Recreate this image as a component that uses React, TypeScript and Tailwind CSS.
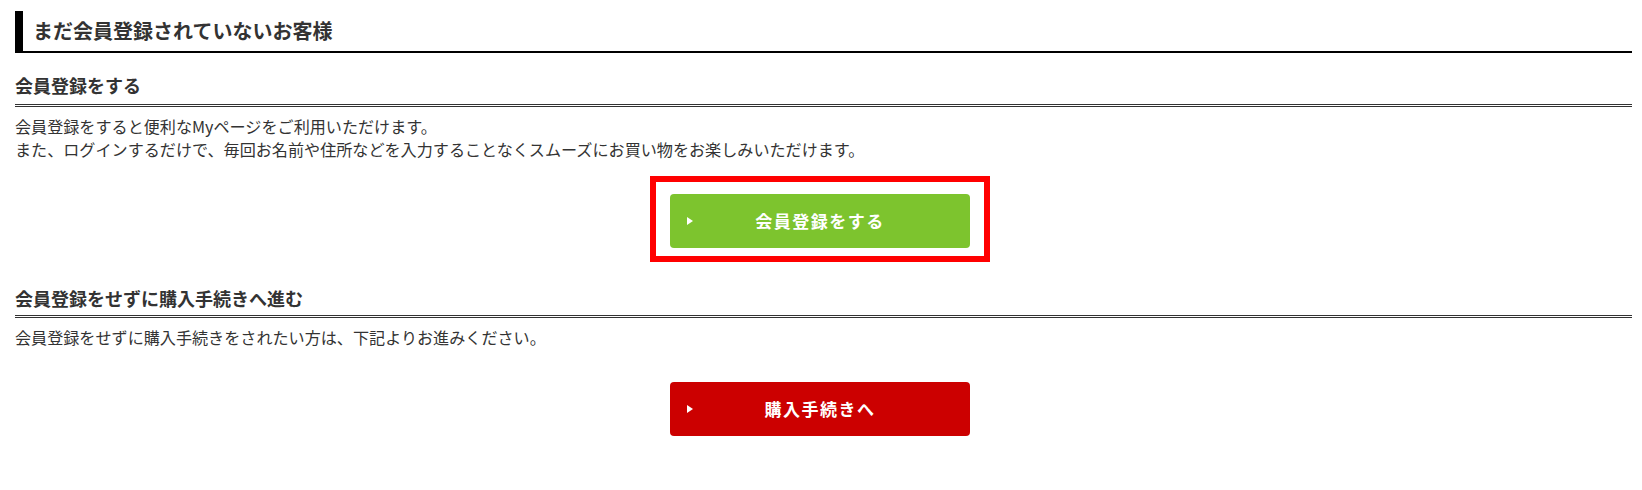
const font = "font-['Meiryo','Noto_Sans_CJK_JP',sans-serif]";

function Arrow() {
  return (
    <svg width="6" height="8" viewBox="0 0 6 8" className="absolute left-[17px] top-1/2 -translate-y-1/2">
      <polygon points="0,0 6,4 0,8" fill="#ffffff" />
    </svg>
  );
}

export default function App() {
  return (
    <div className={`${font} min-h-screen bg-white pl-[15px] pr-[10px] pt-[11px] text-[#333333]`}>
      <h2 className="border-b-2 border-l-8 border-black pl-[10px] text-[20px] font-bold leading-[40px]">
        まだ会員登録されていないお客様
      </h2>

      <h3 className="mt-[18px] border-b-[3px] border-double border-[#333333] pb-[5px] text-[18px] font-bold leading-[28px]">
        会員登録をする
      </h3>
      <p className="mt-[8px] text-[16.1px] leading-[23px]">
        会員登録をすると便利なMyページをご利用いただけます。
        <br />
        また、ログインするだけで、毎回お名前や住所などを入力することなくスムーズにお買い物をお楽しみいただけます。
      </p>

      <div className="mt-[15px] flex justify-center pr-[7px]">
        <div className="flex h-[86px] w-[340px] items-start justify-center border-[6px] border-[#ff0000] pt-[12px]">
          <a
            href="#"
            className="relative flex h-[54px] w-[300px] items-center justify-center rounded-[4px] bg-[#7dc42e] text-[17px] font-bold tracking-[1.5px] text-white"
          >
            <Arrow />
            会員登録をする
          </a>
        </div>
      </div>

      <h3 className="mt-[22px] border-b-[3px] border-double border-[#333333] pb-[3px] text-[18px] font-bold leading-[28px]">
        会員登録をせずに購入手続きへ進む
      </h3>
      <p className="mt-[8px] text-[16.1px] leading-[23px]">
        会員登録をせずに購入手続きをされたい方は、下記よりお進みください。
      </p>

      <div className="mt-[33px] flex justify-center pr-[7px]">
        <a
          href="#"
          className="relative flex h-[54px] w-[300px] items-center justify-center rounded-[4px] bg-[#cc0000] text-[17px] font-bold tracking-[1.5px] text-white"
        >
          <Arrow />
          購入手続きへ
        </a>
      </div>
    </div>
  );
}
